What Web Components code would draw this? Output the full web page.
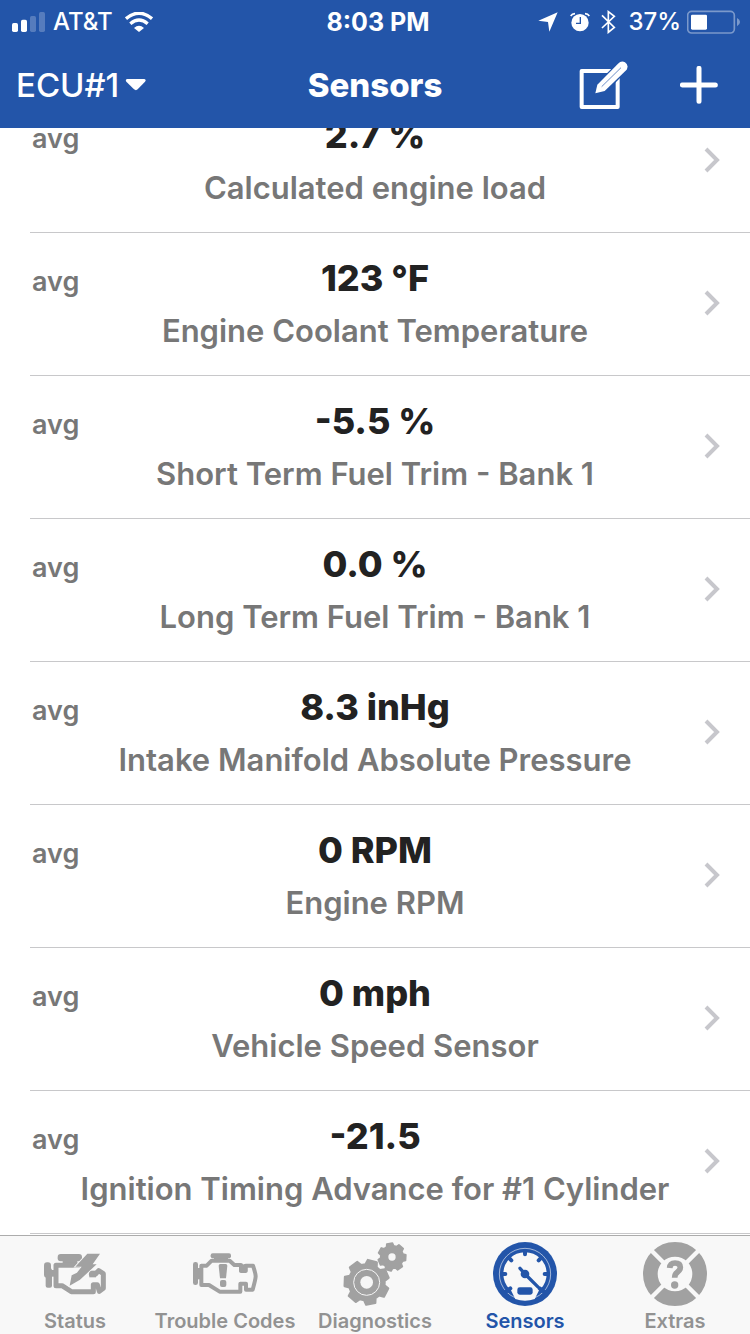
<!DOCTYPE html>
<html lang="en">
<head>
<meta charset="utf-8">
<meta name="viewport" content="width=device-width, initial-scale=1">
<title>Sensors</title>
<style>
  html, body { height: 100%; margin: 0; }
  body { font-family: Inter, "Liberation Sans", sans-serif; background: #fff; }
</style>
</head>
<body>
<obd-app></obd-app>

<script>
const define = (name, html, setup) => {
  const template = document.createElement('template');
  template.innerHTML = html;
  customElements.define(name, class extends HTMLElement {
    constructor() {
      super();
      this.attachShadow({ mode: 'open' }).append(template.content.cloneNode(true));
    }
    connectedCallback() { if (setup) setup(this, this.shadowRoot); }
  });
};

// Outline of a cog: n teeth, outer radius ro, root radius ri, first tooth at the given angle.
const cog = (cx, cy, ro, ri, n, start) => {
  const pts = [];
  const step = 360 / n;
  for (let i = 0; i < n; i++) {
    const a = start + i * step;
    for (const [d, r] of [[-0.36, ri], [-0.23, ro], [0.23, ro], [0.36, ri]]) {
      const t = (a + d * step) * Math.PI / 180;
      pts.push((cx + r * Math.cos(t)).toFixed(1) + ' ' + (cy + r * Math.sin(t)).toFixed(1));
    }
  }
  return 'M' + pts.join('L') + 'Z';
};

const ICONS = {
  status: `
    <rect x="173" y="87" width="73" height="22" rx="9" fill="currentColor"/>
    <path d="M188 105h44v12h-44z" fill="currentColor"/>
    <rect x="132" y="112" width="21" height="46" rx="9" fill="currentColor"/>
    <rect x="138" y="135" width="26" height="20" fill="currentColor"/>
    <rect x="137" y="130" width="19" height="58" rx="6" fill="currentColor"/>
    <path d="M240 121h-72v61h18l28 18h66v-21h12l6 20 12-9v-44l-14-9-10 11h-12" fill="none" stroke="currentColor" stroke-width="15" stroke-linejoin="round" stroke-linecap="round"/>
    <path d="M268 137h20v20h-20z" fill="currentColor"/>
    <path d="M262 86h38l-22 32h12l-50 46-31 18 6-31 16-8 14-18h-19z" fill="currentColor" stroke="#f8f8f8" stroke-width="5"/>
    <path d="M262 86h38l-22 32h12l-50 46-31 18 6-31 16-8 14-18h-19z" fill="currentColor"/>`,
  trouble: `
    <rect x="182" y="85" width="61" height="15" rx="6" fill="currentColor"/>
    <path d="M192 98h42v10h-42z" fill="currentColor"/>
    <rect x="129" y="111" width="15" height="69" rx="7" fill="currentColor"/>
    <path d="M140 129h12v34h-12z" fill="currentColor"/>
    <path d="M154 180v-58h16l15-15h54l14 13h20v18h14v-16h22q8 24 8 32t-9 40h-20v-18h-17v24h-62l-32-20z" fill="none" stroke="currentColor" stroke-width="12" stroke-linejoin="round"/>
    <path d="M268 118h24v22h-24z" fill="currentColor"/>
    <path d="M206 122q0-5 5-5h16q5 0 5 5l-4 38h-18z" fill="currentColor"/>
    <rect x="210" y="165" width="19" height="21" rx="6" fill="currentColor"/>`,
  diagnostics: `
    <path d="${cog(200, 172, 67, 54, 7, -75)}" fill="currentColor" stroke="currentColor" stroke-width="7" stroke-linejoin="round"/>
    <circle cx="200" cy="172" r="39" fill="none" stroke="#f6f6f6" stroke-width="3"/>
    <circle cx="200" cy="172" r="19" fill="#f6f6f6"/>
    <path d="${cog(276, 96, 42, 34, 7, -100)}" fill="currentColor" stroke="currentColor" stroke-width="5" stroke-linejoin="round"/>
    <circle cx="276" cy="96" r="11" fill="#f6f6f6"/>`,
  sensors: `
    <circle cx="225" cy="147" r="96" fill="currentColor"/>
    <circle cx="225" cy="147" r="77" fill="none" stroke="#f8f8f8" stroke-opacity=".6" stroke-width="3"/>
    <path d="M182 190A61 61 0 1 1 268 190" fill="#f8f8f8" stroke="#f8f8f8" stroke-width="8"/>
    <path d="M178 186h94l-18 36q-29 11-58 0z" fill="#f8f8f8"/>
    <path d="M225 80v8M179 101l5 5M271 101l-5 5M158 147h8M292 147h-8" stroke="currentColor" stroke-width="12" stroke-linecap="round"/>
    <path d="M169 199l12-9M281 199l-12-9" stroke="currentColor" stroke-width="12" stroke-linecap="round"/>
    <path d="M210 130l15 17 38 38" fill="none" stroke="currentColor" stroke-width="10" stroke-linecap="round"/>
    <circle cx="225" cy="147" r="13" fill="currentColor"/>
    <rect x="202" y="187" width="46" height="22" rx="7" fill="currentColor"/>`,
  extras: `
    <circle cx="225" cy="147" r="74" fill="none" stroke="currentColor" stroke-width="44"/>
    <path d="M155 77l36 36M295 77l-36 36M155 217l36-36M295 217l-36-36" stroke="#f8f8f8" stroke-width="13"/>
    <path d="M209 129q1-15 16-15 16 0 16 13 0 8-9 15-8 6-8 16" fill="none" stroke="currentColor" stroke-width="17"/>
    <circle cx="224" cy="180" r="11" fill="currentColor"/>`
};

define('status-bar', `
  <style>
    :host { display: grid; grid-template-columns: 1fr auto 1fr; align-items: center; height: 40px;
      padding: 2px 10px 0 12px; color: #fff; font-size: 24px; line-height: 40px; font-weight: 500; }
    div { display: flex; align-items: center; }
    .right { justify-content: flex-end; }
    .time { font-size: 25px; font-weight: 700; padding-left: 4px; }
    svg { display: block; flex: none; }
    .carrier { margin: 0 12px 0 8px; }
    .percent { margin: 0 6px 0 12px; }
    .alarm { margin: 0 11px 0 12px; }
  </style>
  <div>
    <svg width="33" height="20" viewBox="36 30 99 60" fill="currentColor" aria-hidden="true">
      <rect x="36" y="63" width="18" height="27" rx="5"/><rect x="63" y="53" width="18" height="37" rx="5"/>
      <g opacity=".23"><rect x="90" y="42" width="18" height="48" rx="5"/><rect x="117" y="30" width="18" height="60" rx="5"/></g>
    </svg>
    <span class="carrier">AT&amp;T</span>
    <svg width="28" height="20" viewBox="375 30 84 60" aria-hidden="true">
      <path d="M378 50q39-33 78 0M391 65q26-22 52 0" fill="none" stroke="currentColor" stroke-width="10"/>
      <path d="M402 78q15-13 30 0l-15 12z" fill="currentColor"/>
    </svg>
  </div>
  <span class="time">8:03 PM</span>
  <div class="right">
    <svg width="20" height="20" viewBox="115 32 60 60" fill="currentColor" aria-hidden="true"><path d="M174 33l-25 58-4-29-29-4z"/></svg>
    <svg class="alarm" width="20" height="20" viewBox="212 30 60 60" aria-hidden="true">
      <circle cx="242" cy="62" r="26" fill="currentColor"/>
      <path d="M214 42q4-7 13-7M270 42q-4-7-13-7" fill="none" stroke="currentColor" stroke-width="5"/>
      <path d="M243 45v19h-13" fill="none" stroke="#2355a9" stroke-width="4"/>
    </svg>
    <svg width="15" height="24" viewBox="305 25 45 72" aria-hidden="true"><path d="M308 41l37 36-18 15V30l18 14-37 35" fill="none" stroke="currentColor" stroke-width="5"/></svg>
    <span class="percent">37%</span>
    <svg width="53" height="24" viewBox="558 25 159 72" aria-hidden="true">
      <rect x="560" y="29" width="140" height="65" rx="12" fill="none" stroke="currentColor" stroke-opacity=".4" stroke-width="5"/>
      <path d="M708 49q9 4 9 12t-9 13z" fill="currentColor" fill-opacity=".4"/>
      <rect x="570" y="39" width="48" height="45" rx="4" fill="currentColor"/>
    </svg>
  </div>`);

define('nav-bar', `
  <style>
    :host { display: grid; grid-template-columns: 1fr auto 1fr; align-items: center; height: 86px;
      padding: 0 32px 0 16px; color: #fff; }
    h1 { margin: 0 -16px 0 0; font-size: 33px; line-height: 44px; font-weight: 800; grid-column: 2; }
    label { display: flex; align-items: center; gap: 6px; justify-self: start; }
    select { appearance: none; border: 0; margin: 0; padding: 0; background: none; color: inherit;
      font: 500 33px/44px Inter, "Liberation Sans", sans-serif; field-sizing: content; }
    option { color: #222; }
    .actions { display: flex; align-items: center; justify-content: flex-end; gap: 51px; }
    button { border: 0; margin: 0; padding: 0; background: none; color: inherit; }
    svg { display: block; }
  </style>
  <label>
    <select aria-label="Control unit"><option>ECU#1</option></select>
    <svg width="22" height="14" viewBox="382 234 66 42" fill="currentColor" aria-hidden="true"><path d="M388 237h52q7 2 2 8l-22 23q-5 5-11 0l-23-23q-4-6 2-8z"/></svg>
  </label>
  <h1><slot></slot></h1>
  <div class="actions">
    <button aria-label="Edit"><svg width="50" height="50" viewBox="238 177 150 150">
      <path d="M335 210H246v108h108V228" fill="none" stroke="currentColor" stroke-width="12" stroke-linejoin="round"/>
      <path d="M302 264l66-67" stroke="#2355a9" stroke-width="38" fill="none"/>
      <path d="M287 277l6-26 62-63q10-10 21-4 12 8 5 22l-66 64z" fill="currentColor"/>
      <path d="M306 257l58-57" stroke="#2355a9" stroke-width="2"/>
    </svg></button>
    <button aria-label="Add"><svg width="38" height="38" viewBox="539 197 114 114"><path d="M596 204v99M546 254h99" stroke="currentColor" stroke-width="15" stroke-linecap="round"/></svg></button>
  </div>`);

define('sensor-row', `
  <style>
    :host { display: block; height: 143px; box-sizing: border-box; padding-left: 30px; }
    a { display: grid; grid-template-columns: 60px 1fr 60px; height: 100%; box-sizing: border-box;
      border-bottom: 1px solid #c8c8ca; color: #777; text-decoration: none; margin-right: -30px; padding-right: 60px; }
    .mode { padding: 31px 0 0 2px; font-size: 27px; line-height: 36px; font-weight: 600; }
    .body { text-align: center; padding-top: 23px; white-space: nowrap; display: flex; flex-direction: column; align-items: center; margin: 0 -60px; }
    .value { font-size: 36px; line-height: 44px; font-weight: 800; color: #222; }
    .name { font-size: 31px; line-height: 40px; font-weight: 600; margin-top: 11px; }
    svg { align-self: center; justify-self: end; margin-bottom: 3px; }
  </style>
  <a href="#">
    <span class="mode">avg</span>
    <span class="body"><span class="value"></span><span class="name"><slot></slot></span></span>
    <svg width="16" height="26" viewBox="0 0 16 26" aria-hidden="true"><path d="M2 2l11 11L2 24" fill="none" stroke="#c7c7cc" stroke-width="4"/></svg>
  </a>`,
  (el, root) => { root.querySelector('.value').textContent = el.getAttribute('value'); });

define('tab-item', `
  <style>
    :host { display: block; flex: 1; min-width: 0; }
    a { display: flex; flex-direction: column; align-items: center; color: #929292; text-decoration: none;
      font-size: 20px; line-height: 28px; font-weight: 600; white-space: nowrap; padding-top: 5px; }
    svg { display: block; color: #a1a1a1; }
    :host([selected]) a, :host([selected]) svg { color: #2355a9; }
  </style>
  <a href="#"><svg width="66" height="66" viewBox="126 48 198 198" aria-hidden="true"></svg><span><slot></slot></span></a>`,
  (el, root) => {
    root.querySelector('svg').innerHTML = ICONS[el.getAttribute('icon')];
    if (el.hasAttribute('selected')) root.querySelector('a').setAttribute('aria-current', 'page');
  });

define('tab-bar', `
  <style>
    :host { display: block; border-top: 1px solid #acacac; background: #f8f8f8; }
    nav { display: flex; height: 98px; }
  </style>
  <nav><slot></slot></nav>`);

define('obd-app', `
  <style>
    :host { display: flex; flex-direction: column; height: 100vh; overflow: hidden; }
    header { background: #2355a9; flex: none; }
    main { flex: 1; min-height: 0; overflow: hidden auto; scrollbar-width: none; padding-bottom: 4px; }
    tab-bar { flex: none; }
  </style>
  <header><status-bar></status-bar><nav-bar>Sensors</nav-bar></header>
  <main>
    <sensor-row value="2.7 %">Calculated engine load</sensor-row>
    <sensor-row value="123 °F">Engine Coolant Temperature</sensor-row>
    <sensor-row value="-5.5 %">Short Term Fuel Trim - Bank 1</sensor-row>
    <sensor-row value="0.0 %">Long Term Fuel Trim - Bank 1</sensor-row>
    <sensor-row value="8.3 inHg">Intake Manifold Absolute Pressure</sensor-row>
    <sensor-row value="0 RPM">Engine RPM</sensor-row>
    <sensor-row value="0 mph">Vehicle Speed Sensor</sensor-row>
    <sensor-row value="-21.5">Ignition Timing Advance for #1 Cylinder</sensor-row>
  </main>
  <tab-bar>
    <tab-item icon="status">Status</tab-item>
    <tab-item icon="trouble">Trouble Codes</tab-item>
    <tab-item icon="diagnostics">Diagnostics</tab-item>
    <tab-item icon="sensors" selected>Sensors</tab-item>
    <tab-item icon="extras">Extras</tab-item>
  </tab-bar>`,
  (el, root) => { root.querySelector('main').scrollTop = 38; });
</script>
</body>
</html>
